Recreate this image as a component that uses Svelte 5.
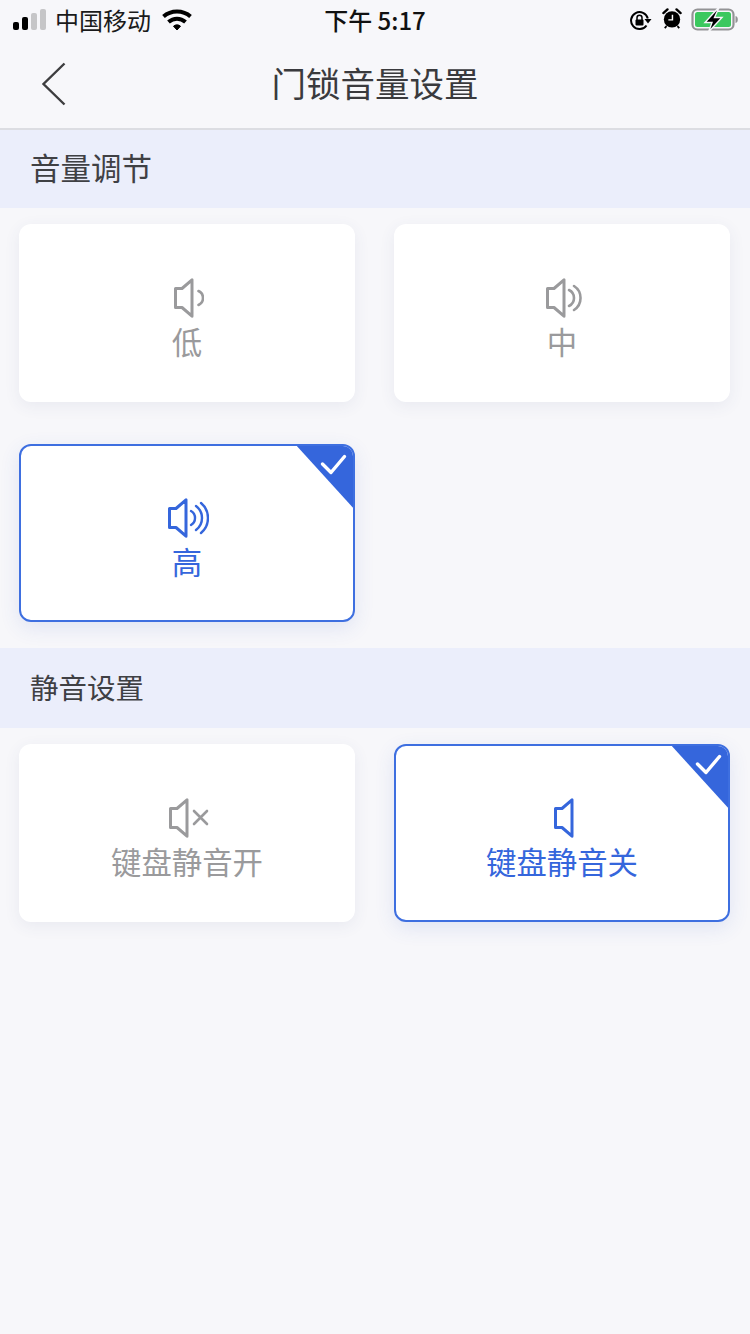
<script>
  const vol = [
    { label: '低', kind: 'low', on: false },
    { label: '中', kind: 'mid', on: false },
    { label: '高', kind: 'high', on: true }
  ];
  const mute = [
    { label: '键盘静音开', kind: 'x', on: false },
    { label: '键盘静音关', kind: 'none', on: true }
  ];
  const widths = { low: 30, mid: 36, high: 41, x: 40, none: 20 };
</script>

{#snippet card(c)}
  <div class="card" class:on={c.on}>
    {#if c.on}
      <div class="corner">
        <svg width="60" height="66" viewBox="0 0 60 66">
          <path d="M0 0H49a11 11 0 0 1 11 11V66Z" fill="#3566dc" />
          <path d="M27.500 20l8.500 8.500L49.500 12.500" fill="none" stroke="#fff" stroke-width="3.400" stroke-linecap="round" stroke-linejoin="round" />
        </svg>
      </div>
    {/if}
    <svg class="spk" width={widths[c.kind]} height="40" viewBox="0 0 {widths[c.kind]} 40" fill="none" stroke="currentColor">
      <path d="M1.500 10.500H8L18 1.800V38.200L8 29.500H1.500Z" stroke-width="3" stroke-linejoin="round" />
      {#if c.kind === 'low'}
        <path d="M24.500 13a7.700 7.700 0 0 1 0 14" stroke-width="2.600" stroke-linecap="round" />
      {/if}
      {#if c.kind === 'mid'}
        <path d="M23 12a8.900 8.900 0 0 1 0 16" stroke-width="2.600" stroke-linecap="round" />
        <path d="M28 8a14.300 14.300 0 0 1 0 24" stroke-width="2.600" stroke-linecap="round" />
      {/if}
      {#if c.kind === 'high'}
        <path d="M23 13a8.100 8.100 0 0 1 0 14" stroke-width="2.400" stroke-linecap="round" />
        <path d="M28 8a15 15 0 0 1 0 24" stroke-width="2.400" stroke-linecap="round" />
        <path d="M33 5a19.600 19.600 0 0 1 0 30" stroke-width="2.400" stroke-linecap="round" />
      {/if}
      {#if c.kind === 'x'}
        <path d="M25 13L38 26M38 13L25 26" stroke-width="2.600" stroke-linecap="round" />
      {/if}
    </svg>
    <div class="label">{c.label}</div>
  </div>
{/snippet}

<div class="page">
  <div class="status">
    <div class="left">
      <svg class="signal" width="33" height="22" viewBox="0 0 33 22">
        <rect x="0" y="13" width="6" height="8" rx="2" fill="#000" />
        <rect x="9" y="8" width="6" height="13" rx="2" fill="#000" />
        <rect x="18" y="4" width="6" height="17" rx="2" fill="#c6c6c8" />
        <rect x="27" y="0" width="6" height="21" rx="2" fill="#c6c6c8" />
      </svg>
      <span class="carrier">中国移动</span>
      <svg class="wifi" width="30" height="22" viewBox="0 0 30 22" fill="none" stroke="#000" stroke-width="4">
        <path d="M1.500 7.500C9 .8 21 .8 28.500 7.500" />
        <path d="M6.500 13C11.500 8.500 18.500 8.500 23.500 13" />
        <path d="M11.500 17.200L15 21L18.500 17.200C16.500 15.400 13.500 15.400 11.500 17.200Z" fill="#000" stroke-width="1" />
      </svg>
    </div>
    <div class="time">下午 5:17</div>
    <div class="right">
      <svg class="lock" width="22" height="22" viewBox="0 0 22 22" fill="none">
        <path d="M16.500 15.500A8.500 8.500 0 1 1 17.800 8.500" stroke="#000" stroke-width="2" />
        <path d="M14.500 9h7l-3.500 4.500Z" fill="#000" />
        <rect x="5.500" y="9.500" width="8" height="6" rx="1" fill="#000" />
        <path d="M7 10V7.800a2.500 2.500 0 0 1 5 0V10" stroke="#000" stroke-width="1.500" />
      </svg>
      <svg class="alarm" width="20" height="21" viewBox="0 0 22 23" fill="none">
        <circle cx="11" cy="12.500" r="9" fill="#000" />
        <path d="M1.500 5.500L6 1.500M20.500 5.500L16 1.500" stroke="#000" stroke-width="2.600" stroke-linecap="round" />
        <path d="M11.500 7.500V13H7" stroke="#fff" stroke-width="1.600" />
        <path d="M5 20l-2 2M17 20l2 2" stroke="#000" stroke-width="2" />
      </svg>
      <svg class="batt" width="47" height="24" viewBox="0 0 47 24" fill="none">
        <rect x="1.500" y="1.500" width="41" height="20" rx="5" stroke="#939395" stroke-width="2.200" />
        <rect x="4" y="4" width="36" height="15" rx="2.500" fill="#3bc85e" />
        <path d="M44.500 8c1.800.5 2.300 1.600 2.300 3.500s-.5 3-2.300 3.500Z" fill="#939395" />
        <path d="M26.500 .8L14 14.500H21L17.500 24L31 9.500H23.500L27.500 .8Z" fill="#000" stroke="#f7f7fa" stroke-width="1.400" />
      </svg>
    </div>
  </div>

  <div class="nav">
    <svg class="back" width="28" height="46" viewBox="0 0 28 46" fill="none">
      <path d="M24.500 2.500L3.500 23L24.500 43.500" stroke="#3d3d3f" stroke-width="2.400" />
    </svg>
    <div class="title">门锁音量设置</div>
  </div>

  <div class="head first">音量调节</div>
  <div class="grid top">
    {#each vol as c}{@render card(c)}{/each}
  </div>

  <div class="head second">静音设置</div>
  <div class="grid">
    {#each mute as c}{@render card(c)}{/each}
  </div>
</div>

<style>
  :global(body) {
    margin: 0;
    background: #f7f7fa;
  }
  .page {
    width: 750px;
    min-height: 1334px;
    background: #f7f7fa;
    font-family: "Noto Sans CJK SC", "Noto Sans", sans-serif;
    overflow: hidden;
  }
  .status {
    height: 40px;
    display: grid;
    grid-template-columns: 1fr auto 1fr;
    align-items: center;
    padding: 0 12px 0 13px;
    color: #000;
  }
  .left {
    display: flex;
    align-items: center;
  }
  .carrier {
    font-size: 24px;
    line-height: 40px;
    margin-left: 9px;
    color: #1a1a1a;
  }
  .wifi {
    margin-left: 11px;
  }
  .time {
    font-size: 24px;
    line-height: 40px;
    font-weight: 500;
    color: #111;
    margin-left: -1px;
  }
  .right {
    display: flex;
    align-items: center;
    justify-content: flex-end;
  }
  .lock {
    margin-top: 2px;
  }
  .alarm {
    margin-left: 10px;
    margin-bottom: 3px;
  }
  .batt {
    margin-left: 9px;
  }
  .nav {
    height: 88px;
    display: flex;
    align-items: center;
    justify-content: center;
    position: relative;
    border-bottom: 2px solid #dcdde2;
  }
  .back {
    position: absolute;
    left: 40px;
    top: 21px;
  }
  .title {
    font-size: 34.500px;
    color: #3a3a3d;
    line-height: 88px;
    padding-bottom: 4px;
  }
  .head {
    background: #ebeefb;
    color: #3f4044;
    display: flex;
    align-items: center;
    box-sizing: border-box;
    padding-left: 30px;
    padding-bottom: 4px;
  }
  .head.first {
    height: 78px;
    font-size: 30.500px;
  }
  .head.second {
    height: 80px;
    font-size: 28.500px;
    margin-top: 26px;
  }
  .grid {
    display: grid;
    grid-template-columns: 336px 336px;
    column-gap: 39px;
    row-gap: 42px;
    padding: 16px 20px 0 19px;
  }
  .card {
    height: 178px;
    box-sizing: border-box;
    border-radius: 12px;
    background: #fff;
    box-shadow: 0 4px 16px rgba(70, 80, 130, 0.08);
    display: flex;
    flex-direction: column;
    align-items: center;
    color: #9a9a9c;
    position: relative;
    overflow: hidden;
    padding-top: 54px;
  }
  .card.on {
    border: 2px solid #3e6fe0;
    color: #3566dc;
    padding-top: 52px;
    box-shadow: 0 6px 20px rgba(60, 90, 200, 0.12);
  }
  .corner {
    position: absolute;
    top: -2px;
    right: -2px;
    line-height: 0;
  }
  .spk {
    display: block;
    margin-left: 3px;
  }
  .label {
    font-size: 30.400px;
    line-height: 44px;
    margin-top: 1px;
  }
</style>
